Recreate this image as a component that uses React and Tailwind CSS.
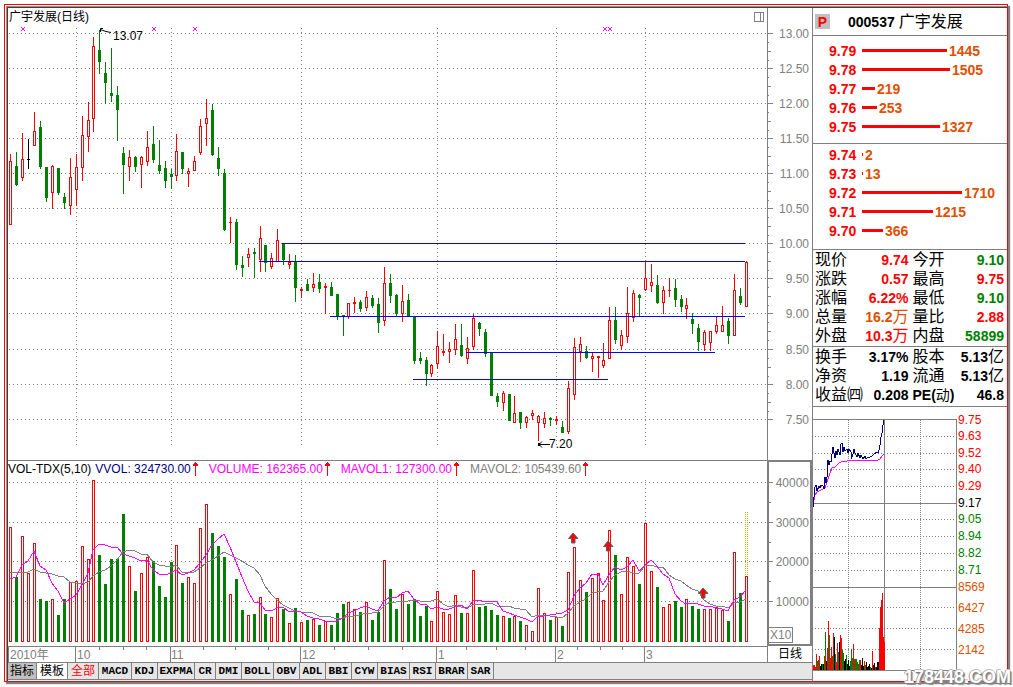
import React from "react";

// kind, high, body top, body bottom, low, volume bar top
const DAYS = [
  ["R",154,161,225,225,527],["G",152,166,185,186,577],["R",133,159,178,181,536],["K",139,159,160,169,573],
  ["R",112,131,146,146,543],["G",121,127,167,169,599],["G",167,167,198,202,601],["R",165,166,193,209,599],
  ["G",168,168,193,195,615],["G",193,197,203,209,599],["R",158,177,206,215,582],["R",154,167,190,206,581],
  ["R",116,135,168,181,546],["R",102,120,137,152,559],["R",37,46,119,132,480],["G",30,50,62,74,555],
  ["G",62,73,83,104,584],["G",48,93,96,102,559],["G",86,95,110,141,559],["G",147,153,165,194,514],
  ["R",150,157,167,181,566],["G",156,157,167,172,591],["R",156,157,165,188,573],["R",131,147,162,166,557],
  ["G",126,144,160,163,561],["G",140,165,171,174,586],["G",161,168,181,188,597],["G",169,174,177,189,562],
  ["R",134,151,176,181,545],["G",152,152,169,174,583],["R",168,171,174,187,577],["R",156,161,171,171,583],
  ["R",119,126,153,155,528],["R",99,118,124,146,504],["G",104,110,155,156,533],["G",147,158,169,176,546],
  ["G",169,173,230,231,557],["R",217,222,223,243,594],["G",219,222,265,270,579],["G",256,265,268,277,610],
  ["R",248,254,258,267,615],["G",248,252,254,278,614],["R",226,238,260,272,597],["G",245,245,263,272,614],
  ["R",253,258,267,269,617],["R",229,240,262,262,598],["G",243,243,260,265,609],["R",254,262,265,269,623],
  ["G",255,261,288,302,608],["R",287,289,291,298,622],["G",279,284,291,291,620],["R",273,284,288,292,619],
  ["G",274,282,289,293,625],["R",283,286,288,314,621],["G",282,287,296,296,625],["G",294,294,317,320,613],
  ["G",315,315,317,336,604],["R",303,303,317,319,602],["R",297,302,304,313,609],["G",300,302,309,312,612],
  ["R",291,297,308,311,602],["G",295,298,306,308,620],["G",298,304,323,333,612],["R",267,283,321,326,560],
  ["G",274,283,296,303,589],["G",294,295,314,316,609],["R",285,301,314,322,594],["G",294,300,317,317,604],
  ["G",317,317,361,364,599],["G",352,358,361,364,616],["G",357,360,374,386,606],["R",364,365,374,377,621],
  ["R",331,346,364,369,591],["R",334,351,353,356,612],["R",342,349,352,363,614],["R",324,339,350,355,595],
  ["G",324,345,356,357,613],["R",337,348,359,364,613],["R",314,318,347,350,570],["G",322,323,329,336,607],
  ["G",329,332,354,357,606],["G",352,352,396,396,610],["G",393,396,402,407,615],["R",391,393,403,411,616],
  ["G",394,394,421,421,618],["R",396,413,423,423,616],["G",412,412,423,429,621],["R",416,417,423,428,625],
  ["R",410,413,416,420,631],["R",415,416,423,441,588],["R",412,418,424,428,613],["G",417,418,420,426,620],
  ["R",416,419,421,425,617],["G",421,427,433,433,626],["R",381,388,432,434,572],["R",338,347,395,400,547],
  ["R",337,344,352,362,580],["G",346,351,358,359,592],["R",353,356,359,372,578],["R",356,356,358,378,573],
  ["R",343,360,366,368,600],["R",307,320,359,359,530],["G",307,320,340,344,555],["R",330,335,346,350,594],
  ["R",287,313,337,343,557],["R",290,293,318,322,566],["G",294,295,298,316,584],["R",262,278,290,291,523],
  ["R",264,282,286,292,571],["G",275,285,303,304,587],["R",286,290,303,314,607],["R",278,290,291,297,604],
  ["G",279,288,300,307,601],["G",295,299,307,312,607],["R",298,305,309,319,599],["G",313,319,324,334,606],
  ["G",324,328,342,351,609],["R",330,332,345,351,609],["R",331,331,343,351,609],["R",316,325,332,334,607],
  ["R",306,325,332,332,610],["G",318,321,336,344,621],["R",274,290,336,336,552],["G",288,296,303,305,593],
  ["R",261,262,307,307,576],
];

const COLORS = { R: "#ff0000", G: "#008000", K: "#000000" };
const dayX = (i) => Math.floor(10.951 + 5.9298 * i);

const MONTHS = [76, 171, 301, 437, 556, 645];
const LEVELS = [
  [282, 745, 243],
  [259, 745, 261],
  [330, 745, 316],
  [466, 715, 352],
  [413, 608, 379],
];
const PRICE_TICKS = [
  ["13.00", 33], ["12.50", 68], ["12.00", 103], ["11.50", 138], ["11.00", 173], ["10.50", 208],
  ["10.00", 243], ["9.50", 278], ["9.00", 313], ["8.50", 349], ["8.00", 384], ["7.50", 419],
];
const VOL_TICKS = [["40000", 482], ["30000", 522], ["20000", 561], ["10000", 601]];

function average(n, seed) {
  return DAYS.map((_, i) => {
    if (i < seed.length) return `${dayX(i)},${seed[i]}`;
    let sum = 0;
    for (let k = i - n + 1; k <= i; k++) sum += DAYS[k][5];
    return `${dayX(i)},${Math.round(sum / n)}`;
  }).join(" ");
}
const MA5 = average(5, [579, 577, 565, 561]);
const MA10 = average(10, [572, 573, 572, 572, 569, 572, 573, 574, 576]);

const dots = { stroke: "#808080", strokeDasharray: "1 3", shapeRendering: "crispEdges" };

function Candle({ x, day }) {
  const [kind, high, top, bottom, low] = day;
  const c = COLORS[kind];
  const h = Math.max(1, bottom - top);
  return (
    <g>
      <rect x={x} y={high} width="1" height={Math.max(1, low - high)} fill={c} />
      <rect x={x - 1} y={top} width="3" height={h} fill={c} />
      {kind === "R" && h > 2 && <rect x={x} y={top + 1} width="1" height={h - 2} fill="#fff" />}
    </g>
  );
}

function PriceChart() {
  return (
    <svg viewBox="8 26 759 434" className="block w-full" role="img" aria-label="日线">
      {PRICE_TICKS.map(([t, y]) => (
        <line key={t} x1="9" x2="767" y1={y + 0.5} y2={y + 0.5} {...dots} />
      ))}
      {MONTHS.map((x) => (
        <line key={x} x1={x + 0.5} x2={x + 0.5} y1="28" y2="446" {...dots} />
      ))}
      <g shapeRendering="crispEdges">
        {DAYS.map((d, i) => <Candle key={i} x={dayX(i)} day={d} />)}
        {LEVELS.map(([a, b, y]) => (
          <rect key={y} x={a} y={y} width={b - a} height="1" fill="#0000ff" />
        ))}
      </g>
      {[22, 153, 194, 604, 609].map((x) => (
        <path key={x} d={`M${x - 1} 27l4 4m0 -4l-4 4`} stroke="#ff00ff" fill="none" />
      ))}
      <path d="M111 32.500L106 31.500L100 29.500M103 28.500H100.500V32" stroke="#000" fill="none" />
      <text x="113" y="40" fontSize="12">13.07</text>
      <path d="M550 444.500H539M542 441.500L539 444.500L542 447.500" stroke="#000" fill="none" />
      <rect x="538" y="443" width="2" height="3" />
      <text x="549" y="448" fontSize="12">7.20</text>
    </svg>
  );
}

function PriceAxis() {
  return (
    <svg viewBox="767 8 45 452" className="block w-full" aria-label="价格">
      <rect x="767" y="8" width="1" height="452" fill="#808080" />
      {PRICE_TICKS.map(([t, y]) => (
        <g key={t} fill="#808080">
          <rect x="768" y={y} width="5" height="1" />
          {y < 419 && <rect x="768" y={y + 9} width="1" height="1" />}
          {y < 419 && <rect x="768" y={y + 18} width="3" height="1" />}
          {y < 419 && <rect x="768" y={y + 27} width="1" height="1" />}
          <text x="809" y={y + 5} fontSize="12" textAnchor="end">{t}</text>
        </g>
      ))}
    </svg>
  );
}

function Marker({ x, y }) {
  return (
    <path
      d={`M${x} ${y - 5}L${x + 5} ${y + 0.5}H${x + 2}V${y + 5}H${x - 1.500}V${y + 0.5}H${x - 4.500}Z`}
      fill="#ff0000" stroke="#606060"
    />
  );
}

function VolumeChart() {
  return (
    <svg viewBox="8 477 759 169" className="block w-full" role="img" aria-label="VOL-TDX">
      {VOL_TICKS.map(([t, y]) => (
        <line key={t} x1="9" x2="767" y1={y + 0.5} y2={y + 0.5} {...dots} />
      ))}
      {MONTHS.map((x) => (
        <line key={x} x1={x + 0.5} x2={x + 0.5} y1="480" y2="641" {...dots} />
      ))}
      <g shapeRendering="crispEdges">
        {DAYS.map(([kind, , , , , top], i) => {
          const red = kind !== "G";
          const x = dayX(i);
          return (
            <g key={i}>
              <rect x={x - 1} y={top} width="3" height={642 - top} fill={red ? "#ff0000" : "#008000"} />
              {red && <rect x={x} y={top + 1} width="1" height={640 - top} fill="#fff" />}
            </g>
          );
        })}
        <line x1="745.5" x2="745.5" y1="512" y2="576" stroke="#b8b800" strokeDasharray="1 1" />
        <line x1="747.5" x2="747.5" y1="512" y2="576" stroke="#b8b800" strokeDasharray="1 1" />
        <polyline points={MA10} fill="none" stroke="#808080" />
        <polyline points={MA5} fill="none" stroke="#ff00ff" />
      </g>
      <Marker x={573} y={538} />
      <Marker x={608} y={546} />
      <Marker x={703} y={593} />
    </svg>
  );
}

function VolumeAxis() {
  return (
    <svg viewBox="767 460 45 186" className="block w-full" aria-label="成交量">
      <path d="M768 460V646M767 461H812M811 460V646M767 645H812" stroke="#808080" strokeWidth="2" />
      {VOL_TICKS.map(([t, y]) => (
        <g key={t} fill="#808080">
          <rect x="769" y={y} width="4" height="1" />
          {y < 601 && <rect x="769" y={y + 20} width="2" height="1" />}
          <text x="809" y={y + 5} fontSize="12" textAnchor="end">{t}</text>
        </g>
      ))}
      <rect x="768.5" y="627.5" width="24" height="15" fill="#fff" stroke="#808080" />
      <text x="770" y="639" fontSize="12" fill="#808080">X10</text>
    </svg>
  );
}

function DateAxis() {
  return (
    <svg viewBox="8 646 759 16" className="block w-full" aria-label="日期" fill="#808080">
      <rect x="8" y="646" width="759" height="1" />
      {[8, 75, 170, 300, 436, 555, 644].map((x) => <rect key={x} x={x} y="646" width="1" height="16" />)}
      {[99, 123, 146, 203, 235, 268, 334, 368, 402, 466, 496, 525, 577, 600, 622].map((x) => (
        <rect key={x} x={x} y="647" width="1" height="3" />
      ))}
      {[["2010年", 10], ["10", 77], ["11", 171], ["12", 302], ["1", 438], ["2", 557], ["3", 646]].map(([t, x]) => (
        <text key={t} x={x} y="659" fontSize="12">{t}</text>
      ))}
    </svg>
  );
}

function UpArrow() {
  return (
    <svg width="5" height="14" viewBox="0 0 5 14" className="block shrink-0" aria-hidden="true">
      <path d="M2 0h1v1h1v1h1v2H3v10H2V4H0V2h1V1h1z" fill="#ff0000" />
    </svg>
  );
}

const LEGEND = [
  ["VVOL: 324730.00", "text-[#000080]"],
  ["VOLUME: 162365.00", "text-[#ff00ff]"],
  ["MAVOL1: 127300.00", "text-[#ff00ff]"],
  ["MAVOL2: 105439.60", "text-[#808080]"],
];

const TABS = [
  ["MACD", "w-[33px]"], ["KDJ", "w-[26px]"], ["EXPMA", "w-[37px]"], ["CR", "w-[21px]"], ["DMI", "w-[26px]"],
  ["BOLL", "w-[32px]"], ["OBV", "w-[26px]"], ["ADL", "w-[26px]"], ["BBI", "w-[26px]"], ["CYW", "w-[26px]"],
  ["BIAS", "w-[32px]"], ["RSI", "w-[26px]"], ["BRAR", "w-[32px]"], ["SAR", "w-[26px]"],
];

const ASKS = [["9.79", 1445], ["9.78", 1505], ["9.77", 219], ["9.76", 253], ["9.75", 1327]];
const BIDS = [["9.74", 2], ["9.73", 13], ["9.72", 1710], ["9.71", 1215], ["9.70", 366]];

function Depth({ rows, label }) {
  return (
    <table aria-label={label} className="w-full border-collapse text-sm leading-none font-bold">
      <tbody>
        {rows.map(([price, size]) => (
          <tr key={price} className="h-[19px]">
            <th scope="row" className="w-[49px] p-0 pl-4 text-left text-[#ff0000]">{price}</th>
            <td className="p-0">
              <div className="flex items-center gap-0.5 text-[#e05000]">
                <span
                  className="h-[3px] bg-[#ff0000]"
                  style={{ width: Math.max(1, Math.round(size * 0.0585)) }}
                />
                <span>{size}</span>
              </div>
            </td>
          </tr>
        ))}
      </tbody>
    </table>
  );
}

const RED = "text-[#ff0000]";
const GREEN = "text-[#008000]";
const ORANGE = "text-[#e05000]";
const BLACK = "text-black";
const QUOTE = [
  ["现价", "9.74", "", RED, "今开", "9.10", "", GREEN],
  ["涨跌", "0.57", "", RED, "最高", "9.75", "", RED],
  ["涨幅", "6.22%", "", RED, "最低", "9.10", "", GREEN],
  ["总量", "16.2", "万", ORANGE, "量比", "2.88", "", RED],
  ["外盘", "10.3", "万", RED, "内盘", "58899", "", GREEN],
];
const FUNDAMENTALS = [
  ["换手", "3.17%", "", BLACK, "股本", "5.13", "亿", BLACK],
  ["净资", "1.19", "", BLACK, "流通", "5.13", "亿", BLACK],
  ["收益㈣", "0.208", "", BLACK, "PE(动)", "46.8", "", BLACK],
];

function Value({ number, unit, color }) {
  return (
    <td className={`${color} p-0 text-right text-sm leading-none font-bold`}>
      {number}
      {unit && <span className="text-base leading-none font-normal">{unit}</span>}
    </td>
  );
}

function Stats({ rows, label }) {
  return (
    <table aria-label={label} className="w-full table-fixed border-collapse whitespace-nowrap">
      <tbody>
        {rows.map(([a, av, au, ac, b, bv, bu, bc]) => (
          <tr key={a} className="h-[19px]">
            <th scope="row" className="w-[50px] p-0 pl-0.5 text-left text-base leading-none font-normal">{a}</th>
            <Value number={av} unit={au} color={ac} />
            <th scope="row" className="w-[50px] p-0 pl-1 text-left text-base leading-none font-normal">
              {b.startsWith("PE") ? (
                <span className="text-sm leading-none font-bold">PE(<span className="font-normal">动</span>)</span>
              ) : b}
            </th>
            <Value number={bv} unit={bu} color={bc} />
          </tr>
        ))}
      </tbody>
    </table>
  );
}

const MINI_LABELS = [
  ["9.75", 420, "#ff0000"], ["9.63", 436, "#ff0000"], ["9.52", 453, "#ff0000"], ["9.40", 469, "#ff0000"],
  ["9.29", 486, "#ff0000"], ["9.17", 503, "#000000"], ["9.05", 519, "#008000"], ["8.94", 536, "#008000"],
  ["8.82", 553, "#008000"], ["8.71", 570, "#008000"], ["8569", 587, "#e05000"], ["6427", 608, "#e05000"],
  ["4285", 629, "#e05000"], ["2142", 650, "#e05000"],
];
const TICKS =
  "g6 r5 r5 r3 r16 g9 g10 r14 k4 k6 g6 k6 r14 g38 k9 r22 r49 g35 r12 r23 g14 r37 k33 g16 r8 r27 g18 k28 r35 r32 g20 g17 k9 k11 g15 k6 k10 k4 g9 g21 g12 r26 g11 r11 g11 g8 r6 g10 r10 k5 k12 k4 r9 g5 k8 k3 k4 k6 g3 k2 r19 k5 k7 r3 k3 k8 k8 r42 r63 r70 r77 r33 r28".split(" ");

function Intraday() {
  return (
    <svg viewBox="813 407 194 274" className="block w-full" role="img" aria-label="分时">
      <g shapeRendering="crispEdges">
        {[436, 453, 469, 486, 519, 536, 553, 570, 607, 628, 649].map((y) => (
          <line key={y} x1="815" x2="955" y1={y + 0.5} y2={y + 0.5} stroke="#808080" strokeDasharray="1 2" />
        ))}
        {[848, 920].map((x) => (
          <line key={x} x1={x + 0.5} x2={x + 0.5} y1="420" y2="670" stroke="#808080" strokeDasharray="1 1" />
        ))}
        <path d="M813 419.500H956.500V670.500H813M884.500 419V670M813 503.500H956M813 587.500H956" stroke="#808080" fill="none" />
        {TICKS.map((t, i) => (
          <rect key={i} x={812 + i} y={670 - Number(t.slice(1))} width="1" height={t.slice(1)} fill={COLORS[t[0].toUpperCase()]} />
        ))}
        <polyline
          fill="none" stroke="#ff00ff"
          points="812,504 814,500 815,495 817,492 821,490 825,488 827,482 830,473 832,468 835,467 837,465 839,463 843,461 847,461 850,460 878,460 880,459 882,456 884,454"
        />
        <polyline
          fill="none" stroke="#000080"
          points="813,507 813,497 814,497 815,487 816,485 817,491 819,486 820,488 821,485 823,486 824,489 825,477 826,483 827,477 828,460 829,465 830,461 831,462 833,447 835,458 836,451 837,455 838,449 840,455 841,444 842,443 843,452 844,447 845,451 847,449 848,453 849,449 851,452 851,459 853,454 854,449 855,453 857,457 858,453 860,458 861,455 863,459 865,456 866,459 868,457 870,457 872,456 874,454 877,452 878,453 879,450 880,445 881,437 882,433 883,425 884,420"
        />
      </g>
      {MINI_LABELS.map(([t, y, c]) => (
        <text key={t} x="958" y={y + 4} fontSize="12" fill={c}>{t}</text>
      ))}
    </svg>
  );
}

const tab = "border-r border-[#808080] text-center";

export default function App() {
  return (
    <div className="relative bg-white pt-1 pr-[5px] pb-1 pl-1 font-['Liberation_Sans','Noto_Sans_CJK_SC',sans-serif] text-xs leading-none text-black">
      <div className="border border-[#ff0000] pt-px pl-px shadow-[2px_2px_1px_#808080]">
        <div className="border-t border-l border-[#909090]">
          <main className="flex border-t border-l border-[#404040]">
            <div className="flex min-w-0 flex-1 flex-col">
              <section className="flex">
                <div className="min-w-0 flex-1">
                  <header className="flex h-[18px] items-center justify-between pr-[3px] pl-px">
                    <h1>广宇发展(日线)</h1>
                    <button aria-label="窗口" className="flex h-[10px] w-[10px] justify-end border border-[#808080]">
                      <span className="h-full w-[3px] border-l border-[#808080]" />
                    </button>
                  </header>
                  <PriceChart />
                </div>
                <div className="w-[45px]"><PriceAxis /></div>
              </section>
              <section className="flex">
                <div className="min-w-0 flex-1">
                  <div className="flex h-[17px] items-center gap-[11px] border-t border-[#808080]">
                    <h2 className="-mr-[7px]">VOL-TDX(5,10)</h2>
                    {LEGEND.map(([text, color]) => (
                      <div key={text} className={`${color} flex items-center gap-0.5`}>{text}<UpArrow /></div>
                    ))}
                  </div>
                  <VolumeChart />
                </div>
                <div className="w-[45px]"><VolumeAxis /></div>
              </section>
              <section className="flex">
                <div className="min-w-0 flex-1"><DateAxis /></div>
                <div className="flex w-[45px] items-center justify-center border-l border-[#808080]">日线</div>
              </section>
              <nav className="flex h-[18px] border-y border-[#808080] bg-[#e6e6e6] leading-4">
                <button className={`${tab} w-[29px] bg-[#c0c0c0]`}>指标</button>
                <button className={`${tab} w-[31px] bg-white`}>模板</button>
                <button className={`${tab} w-[31px] text-[#ff0000]`}>全部</button>
                {TABS.map(([name, width]) => (
                  <button
                    key={name}
                    className={`${tab} ${width} font-['Liberation_Mono',monospace] text-[11px] font-bold`}
                  >
                    {name}
                  </button>
                ))}
              </nav>
            </div>
            <aside className="w-[195px] shrink-0 border-l border-[#808080]">
              <header className="flex h-7 items-center border-b border-[#808080] pl-0.5">
                <button className="h-[15px] w-[15px] bg-[#c0c0c0] text-sm leading-none font-bold text-[#ff0000]">P</button>
                <h2 className="ml-[18px] flex items-center gap-1 text-base leading-none">
                  <span className="text-sm leading-none font-bold">000537</span>广宇发展
                </h2>
              </header>
              <div className="border-b border-[#808080] pt-[5px] pb-[7px]"><Depth rows={ASKS} label="卖盘" /></div>
              <div className="border-b border-[#808080] pt-px pb-[9px]"><Depth rows={BIDS} label="买盘" /></div>
              <div className="border-b border-[#808080] pr-[3px] pb-px"><Stats rows={QUOTE} label="行情" /></div>
              <div className="border-b border-[#808080] pr-[3px] pb-0.5"><Stats rows={FUNDAMENTALS} label="基本面" /></div>
              <Intraday />
            </aside>
          </main>
        </div>
      </div>
      <div className="absolute right-0.5 bottom-0 text-lg leading-none font-bold text-white [text-shadow:1px_1px_0_#808080,-1px_0_0_#a0a0a0,0_-1px_0_#c0c0c0,2px_2px_1px_#909090]">
        178448.COM
      </div>
    </div>
  );
}
